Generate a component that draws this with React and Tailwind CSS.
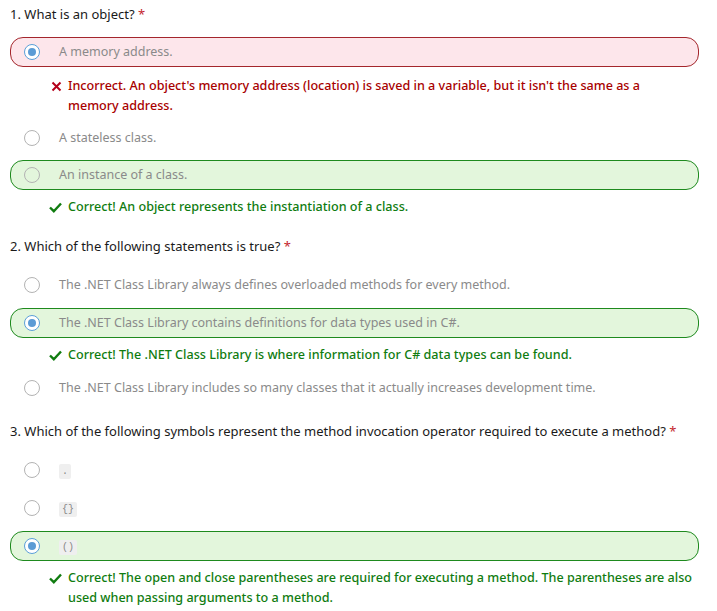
import React from "react";

const font = { fontFamily: '"Noto Sans", "Open Sans", Arial, sans-serif' };

function Radio({ selected }) {
  if (selected) {
    return (
      <span className="flex h-[16px] w-[16px] shrink-0 items-center justify-center rounded-full border border-[#5b9fd8] bg-white">
        <span className="h-[8px] w-[8px] rounded-full bg-[#5b9bd5]" />
      </span>
    );
  }
  return <span className="h-[16px] w-[16px] shrink-0 rounded-full border border-[#b3b3b3]" />;
}

function Code({ children }) {
  return (
    <span
      className="inline-flex h-[15px] items-center rounded-[2px] bg-[#efefef] px-[3px] text-[10px] text-[#888]"
      style={{ fontFamily: '"Liberation Mono", monospace' }}
    >
      {children}
    </span>
  );
}

function Option({ children, state, selected, className = "" }) {
  const box =
    state === "wrong"
      ? "border border-[#a4262c] bg-[#fde6eb]"
      : state === "right"
      ? "border border-[#1e8a1e] bg-[#e3f6dc]"
      : "border border-transparent";
  return (
    <div className={`flex h-[30px] items-center gap-[19px] rounded-[13px] pl-[13px] ${box} ${className}`}>
      <Radio selected={selected} />
      <span className="text-[12.5px] text-[#8a8a8a]">{children}</span>
    </div>
  );
}

function Cross() {
  return (
    <svg width="11" height="11" viewBox="0 0 11 11" className="mt-[5px] shrink-0">
      <path d="M1.5 1.5 L9.5 9.5 M9.5 1.5 L1.5 9.5" stroke="#b4001a" strokeWidth="2" />
    </svg>
  );
}

function Check() {
  return (
    <svg width="13" height="11" viewBox="0 0 13 11" className="mt-[5px] shrink-0">
      <path d="M1 5.5 L4.8 9.2 L12 1.5" stroke="#107c10" strokeWidth="2.4" fill="none" />
    </svg>
  );
}

function Feedback({ ok, children, className = "" }) {
  return (
    <div className={`flex gap-[6px] ${ok ? "pl-[39px]" : "pl-[41px]"} ${className}`}>
      {ok ? <Check /> : <Cross />}
      <p
        className={`text-[12.6px] font-medium leading-[20px] ${
          ok ? "text-[#107c10]" : "text-[#a80000]"
        }`}
      >
        {children}
      </p>
    </div>
  );
}

function Question({ title, children, className = "", headH = "h-[30px]" }) {
  return (
    <div className={className}>
      <div className={`flex ${headH} items-center text-[13px] text-[#1a1a1a]`}>
        <span>
          {title} <span className="text-[#c4262e]">*</span>
        </span>
      </div>
      <div className="mt-[8px] flex flex-col gap-[8px]">{children}</div>
    </div>
  );
}

export default function App() {
  return (
    <div className="min-h-[611px] w-[717px] bg-white pl-[10px] pr-[18px]" style={font}>
      <Question headH="h-[29px]" title="1. What is an object?">
        <Option state="wrong" selected>
          A memory address.
        </Option>
        <Feedback className="mt-[1px] -mb-[1px]">
          Incorrect. An object's memory address (location) is saved in a variable, but it isn't the
          same as a {"memory\u00a0address."}
        </Feedback>
        <Option>A stateless class.</Option>
        <Option state="right" className="-mt-[1px]">
          An instance of a class.
        </Option>
        <Feedback ok className="-mt-[1px]">
          Correct! An object represents the instantiation of a class.
        </Feedback>
      </Question>
      <Question className="mt-[15px]" title="2. Which of the following statements is true?">
        <Option>The .NET Class Library always defines overloaded methods for every method.</Option>
        <Option state="right" selected>
          The .NET Class Library contains definitions for data types used in C#.
        </Option>
        <Feedback ok className="-mt-[1px]">
          Correct! The .NET Class Library is where information for C# data types can be found.
        </Feedback>
        <Option>
          The .NET Class Library includes so many classes that it actually increases development time.
        </Option>
      </Question>
      <Question
        className="mt-[14px]"
        title="3. Which of the following symbols represent the method invocation operator required to execute a method?"
      >
        <Option>
          <Code>.</Code>
        </Option>
        <Option>
          <Code>{"{}"}</Code>
        </Option>
        <Option state="right" selected>
          <Code>()</Code>
        </Option>
        <Feedback ok className="-mt-[1px]">
          Correct! The open and close parentheses are required for executing a method. The parentheses
          are also used when passing arguments to a method.
        </Feedback>
      </Question>
    </div>
  );
}
